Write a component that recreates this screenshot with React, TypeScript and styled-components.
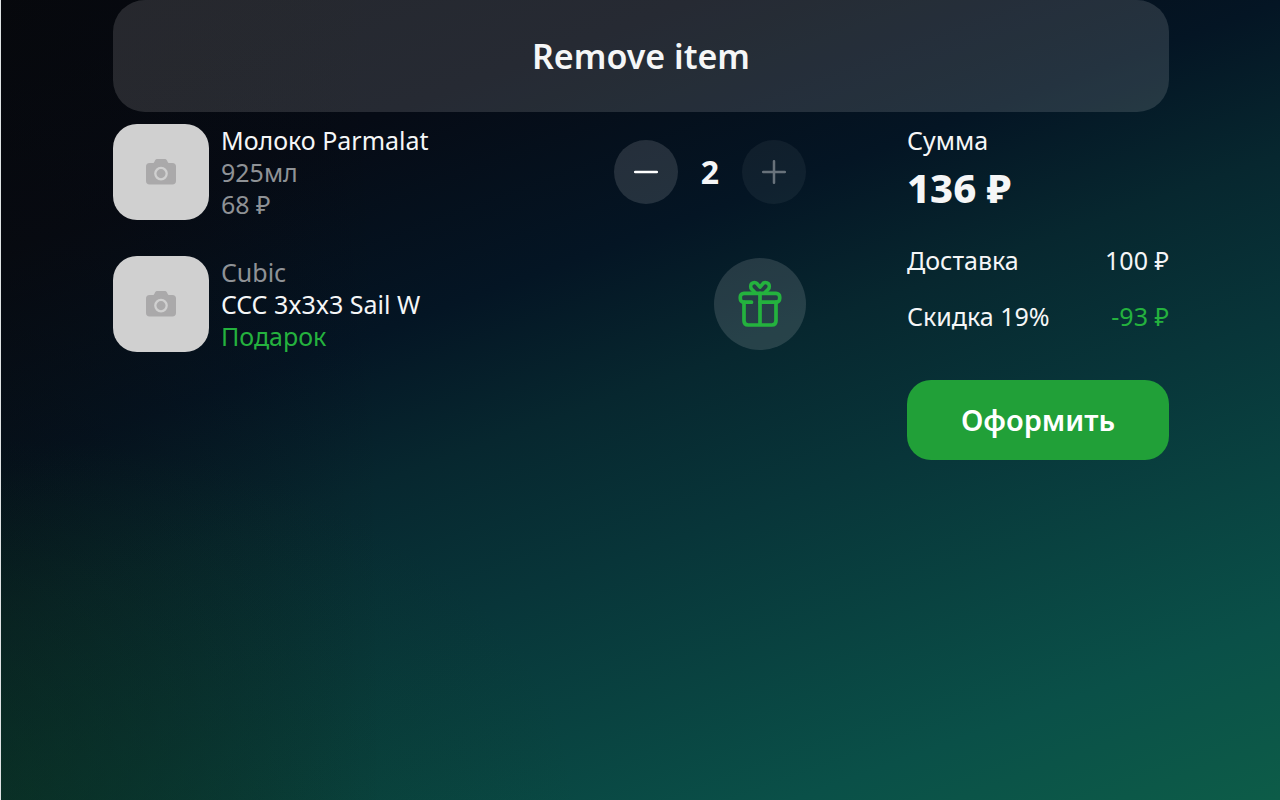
import React from 'react';
import styled, { createGlobalStyle } from 'styled-components';

const GlobalStyle = createGlobalStyle`
  * { box-sizing: border-box; }
  body {
    margin: 0;
    font-family: "Noto Sans", "Open Sans", sans-serif;
    font-size: 25px;
    line-height: 32px;
    color: #f5f6f7;
    background: #080808;
  }
  button { font-family: inherit; color: inherit; border: 0; padding: 0; cursor: pointer; }
  h1, h2, p, ul, dl, dd, dt { margin: 0; padding: 0; font-size: inherit; font-weight: inherit; }
`;

const Page = styled.main`
  min-height: 100vh;
  padding: 0 111px 0 112px;
  border-left: 1px solid #dfe3e4;
  background:
    radial-gradient(ellipse at 0% 100%, rgba(12, 62, 34, 0.4), rgba(12, 62, 34, 0) 32%),
    linear-gradient(90deg, rgba(9, 8, 8, 0.36), rgba(9, 8, 8, 0) 30%),
    linear-gradient(160deg, #05080f 0%, #060b15 20%, #041524 37%, #07272f 49%, #083539 62%, #0a5048 86%, #0d5c48 100%);
`;

const RemoveButton = styled.button`
  display: block;
  width: 100%;
  height: 112px;
  border-radius: 32px;
  background: rgba(255, 255, 255, 0.13);
  font-size: 34px;
  line-height: 40px;
  font-weight: 600;
`;

const Columns = styled.div`
  display: grid;
  grid-template-columns: minmax(0, 1fr) 262px;
  gap: 101px;
  margin-top: 12px;
`;

const Items = styled.ul`
  display: flex;
  flex-direction: column;
  gap: 36px;
  list-style: none;
`;

const Item = styled.li`
  display: flex;
  align-items: center;
  gap: 12px;
`;

const Thumb = styled.div`
  display: flex;
  flex: none;
  width: 96px;
  height: 96px;
  border-radius: 24px;
  background: #d0d0d0;
`;

const Details = styled.div`
  flex: 1;
`;

const Line = styled.p<{ $tone?: 'muted' | 'accent' }>`
  color: ${({ $tone }) =>
    $tone === 'muted' ? '#8f9296' : $tone === 'accent' ? '#24b23e' : 'inherit'};
`;

const Stepper = styled.div`
  display: flex;
  align-items: center;
`;

const StepButton = styled.button`
  display: flex;
  align-items: center;
  justify-content: center;
  width: 64px;
  height: 64px;
  border-radius: 50%;
  background: rgba(255, 255, 255, 0.13);
  color: #ffffff;
  &:disabled { opacity: 0.4; cursor: default; }
`;

const Quantity = styled.output`
  width: 64px;
  text-align: center;
  font-size: 32px;
  font-weight: 700;
`;

const GiftBadge = styled.div`
  display: flex;
  align-items: center;
  justify-content: center;
  width: 92px;
  height: 92px;
  border-radius: 50%;
  background: rgba(255, 255, 255, 0.13);
  color: #24b23e;
`;

const Summary = styled.section`
  display: flex;
  flex-direction: column;
`;

const Total = styled.p`
  margin-top: 8px;
  font-size: 40px;
  line-height: 48px;
  font-weight: 800;
`;

const Charges = styled.dl`
  display: flex;
  flex-direction: column;
  gap: 24px;
  margin-top: 32px;
`;

const Charge = styled.div<{ $accent?: boolean }>`
  display: flex;
  justify-content: space-between;
  dd { color: ${({ $accent }) => ($accent ? '#24b23e' : 'inherit')}; }
`;

const Checkout = styled.button`
  height: 80px;
  margin-top: 48px;
  border-radius: 24px;
  background: #21a038;
  color: #ffffff;
  font-size: 29px;
  line-height: 36px;
  font-weight: 600;
`;

const CameraIcon = () => (
  <svg width="96" height="96" viewBox="0 0 96 96" aria-hidden="true">
    <path
      fill="#aaa9aa"
      d="M36.5 39h3.200c.9 0 1.300-.4 1.700-1.200l.6-1.300c.5-1 1.200-1.500 2.300-1.500h7.400c1.100 0 1.800.5 2.300 1.500l.6 1.300c.4.800.8 1.200 1.700 1.200h3.200c2.200 0 3.500 1.300 3.500 3.500v14.400c0 2.200-1.300 3.500-3.500 3.500H36.500c-2.200 0-3.500-1.300-3.500-3.500V42.500c0-2.200 1.300-3.500 3.500-3.500Z"
    />
    <circle cx="48" cy="49.600" r="5.700" fill="none" stroke="#d0d0d0" strokeWidth="2.300" />
  </svg>
);

const MinusIcon = () => (
  <svg width="24" height="24" viewBox="0 0 24 24" stroke="currentColor" strokeWidth="2.500" strokeLinecap="round" aria-hidden="true">
    <path d="M1.200 12h21.600" />
  </svg>
);

const PlusIcon = () => (
  <svg width="24" height="24" viewBox="0 0 24 24" stroke="currentColor" strokeWidth="2.500" strokeLinecap="round" aria-hidden="true">
    <path d="M1.200 12h21.600M12 1.200v21.600" />
  </svg>
);

const GiftIcon = () => (
  <svg width="48" height="48" viewBox="0 0 48 48" fill="none" stroke="currentColor" strokeWidth="3.700" strokeLinecap="round" strokeLinejoin="round" aria-hidden="true">
    <path d="M15.500 22.200H8c-2.200 0-3.700-1.500-3.700-3.700V17c0-2.200 1.500-3.700 3.700-3.700h32c2.200 0 3.700 1.500 3.700 3.700v1.500c0 2.200-1.500 3.700-3.700 3.700H24" />
    <path d="M8 22.200v18.600C8 43.500 9.500 45 12.200 45h23.600c2.700 0 4.200-1.500 4.200-4.200V22.200M24 13.300V45" />
    <path d="M19 12.500l-3.200-3.200c-1.400-1.500-1.400-4.200 0-5.700 1.500-1.500 3.800-1.500 5.200 0l3 3.400 3-3.400c1.400-1.500 3.700-1.500 5.200 0 1.400 1.500 1.400 4.200 0 5.700L29 12.500" />
  </svg>
);

export default function App() {
  return (
    <>
      <GlobalStyle />
      <Page>
        <RemoveButton type="button">Remove item</RemoveButton>
        <Columns>
          <Items>
            <Item>
              <Thumb><CameraIcon /></Thumb>
              <Details>
                <Line>Молоко Parmalat</Line>
                <Line $tone="muted">925мл</Line>
                <Line $tone="muted">68 ₽</Line>
              </Details>
              <Stepper>
                <StepButton type="button" aria-label="Уменьшить"><MinusIcon /></StepButton>
                <Quantity>2</Quantity>
                <StepButton type="button" aria-label="Увеличить" disabled><PlusIcon /></StepButton>
              </Stepper>
            </Item>
            <Item>
              <Thumb><CameraIcon /></Thumb>
              <Details>
                <Line $tone="muted">Cubic</Line>
                <Line>CCC 3x3x3 Sail W</Line>
                <Line $tone="accent">Подарок</Line>
              </Details>
              <GiftBadge><GiftIcon /></GiftBadge>
            </Item>
          </Items>
          <Summary>
            <h2>Сумма</h2>
            <Total>136 ₽</Total>
            <Charges>
              <Charge>
                <dt>Доставка</dt>
                <dd>100 ₽</dd>
              </Charge>
              <Charge $accent>
                <dt>Скидка 19%</dt>
                <dd>-93 ₽</dd>
              </Charge>
            </Charges>
            <Checkout type="button">Оформить</Checkout>
          </Summary>
        </Columns>
      </Page>
    </>
  );
}
